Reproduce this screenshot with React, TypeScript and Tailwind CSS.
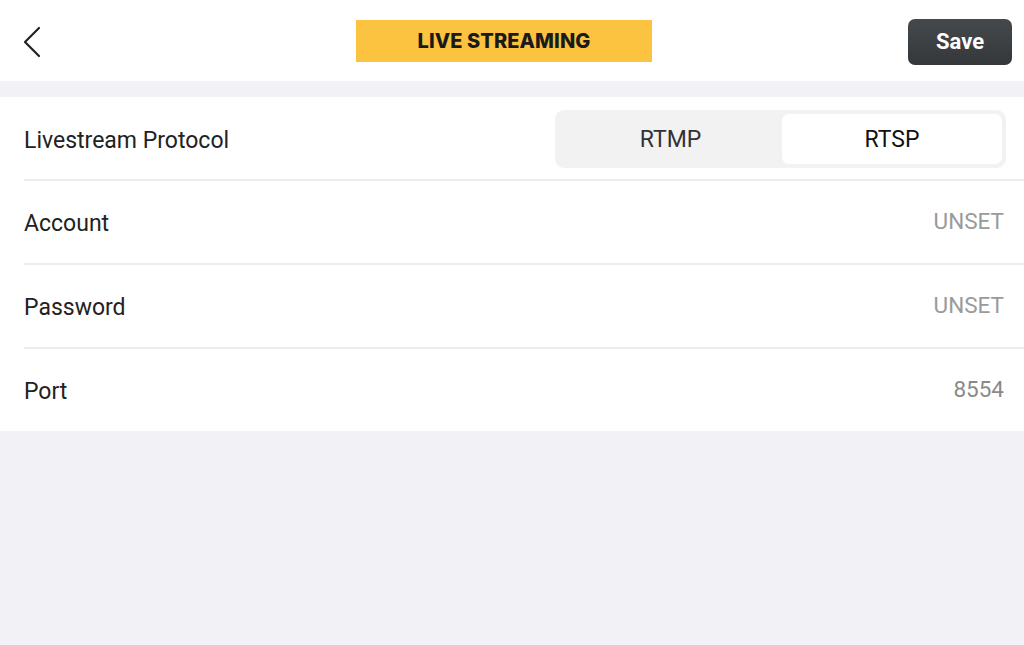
import React from "react";

export default function App() {
  const font = { fontFamily: "Roboto, 'Noto Sans', sans-serif" };
  return (
    <div className="w-[1024px] h-[645px] bg-[#f2f2f6] flex flex-col" style={font}>
      <div className="h-[81px] bg-white flex items-center justify-between pl-[22px] pr-[12px]">
        <svg width="20" height="32" viewBox="0 0 20 32" className="mt-[2px]">
          <path d="M17 2 L3 16 L17 30" fill="none" stroke="#222" strokeWidth="2.2" strokeLinecap="round" strokeLinejoin="round" />
        </svg>
        <div className="w-[296px] h-[42px] bg-[#fbc33f] flex items-center justify-center ml-[58px]">
          <span className="text-[20px] font-extrabold tracking-[0.1px] text-[#1a1a1a] mt-[1px]" style={{ fontFamily: "Inter, 'Open Sans', sans-serif" }}>
            LIVE STREAMING
          </span>
        </div>
        <button className="w-[104px] h-[46px] mt-[2px] rounded-[7px] bg-gradient-to-b from-[#46494c] to-[#35383b] text-white text-[22px] font-bold flex items-center justify-center">
          Save
        </button>
      </div>
      <div className="h-[16px]" />
      <div className="bg-white">
        <div className="h-[82px] pl-[24px] pr-[18px] flex items-center justify-between">
          <span className="text-[23px] text-[#222] mt-[7px]">Livestream Protocol</span>
          <div className="w-[451px] h-[58px] mt-[2px] rounded-[9px] bg-[#f2f2f2] p-[4px] flex">
            <div className="flex-1 flex items-center justify-center text-[23px] text-[#333] pt-[2px]">RTMP</div>
            <div className="w-[220px] rounded-[7px] bg-white flex items-center justify-center text-[23px] text-[#111] pt-[2px]">RTSP</div>
          </div>
        </div>
        <div className="ml-[24px] h-[2px] bg-[#ececec]" />
        <div className="h-[82px] pl-[24px] pr-[20px] flex items-center justify-between">
          <span className="text-[23px] text-[#222] mt-[5px]">Account</span>
          <span className="text-[22.5px] text-[#9a9a9a]">UNSET</span>
        </div>
        <div className="ml-[24px] h-[2px] bg-[#ececec]" />
        <div className="h-[82px] pl-[24px] pr-[20px] flex items-center justify-between">
          <span className="text-[23px] text-[#222] mt-[5px]">Password</span>
          <span className="text-[22.5px] text-[#9a9a9a]">UNSET</span>
        </div>
        <div className="ml-[24px] h-[2px] bg-[#ececec]" />
        <div className="h-[82px] pl-[24px] pr-[20px] flex items-center justify-between">
          <span className="text-[23px] text-[#222] mt-[4px]">Port</span>
          <span className="text-[22.5px] text-[#8a8a8a]">8554</span>
        </div>
      </div>
    </div>
  );
}
